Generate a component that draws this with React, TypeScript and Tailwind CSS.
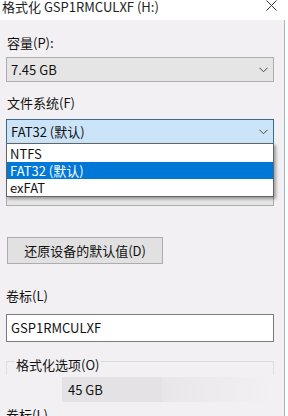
import React from "react";

const font = { fontFamily: '"Noto Sans CJK SC", "Noto Sans", sans-serif' };

function Chevron() {
  return (
    <svg className="w-[9px] h-[6px]" viewBox="0 0 9 6" fill="none" stroke="#4a4a4a" strokeWidth={1}>
      <path d="M0.5 0.8 L4.5 4.8 L8.5 0.8" />
    </svg>
  );
}

const options = ["NTFS", "FAT32 (默认)", "exFAT"];

export default function App() {
  return (
    <div className="w-[288px] h-[416px] overflow-hidden bg-white text-[13px] text-[#111]" style={font}>
      {/* title bar */}
      <div className="h-[20px] flex items-start justify-between bg-white">
        <span className="pl-[2px] leading-[14px] text-[13px] text-[#222]">格式化 GSP1RMCULXF (H:)</span>
        <svg className="mr-[11px] w-[11px] h-[11px]" viewBox="0 0 11 11" stroke="#333" strokeWidth={1}>
          <path d="M0.5 0.5 L10.5 10.5 M10.5 0.5 L0.5 10.5" />
        </svg>
      </div>

      <div className="flex">
        <div className="w-[284px] h-[396px] overflow-hidden bg-[#f2f0f2] pl-[6px] pr-[10px]">
          <div className="mt-[13px] h-[20px] leading-[20px] pl-[1px]">容量(P):</div>
          <div className="mt-[4px] h-[25px] border border-[#adadad] bg-[#e6e5e6] flex items-center justify-between pl-[4px] pr-[5px]">
            <span>7.45 GB</span>
            <Chevron />
          </div>

          <div className="mt-[11px] h-[20px] leading-[20px] pl-[1px]">文件系统(F)</div>
          <div className="relative mt-[6px]">
            <div className="h-[25px] border border-[#3b6a94] bg-[#cce4f7] flex items-center justify-between pl-[4px] pr-[5px]">
              <span>FAT32 (默认)</span>
              <Chevron />
            </div>
            <div className="absolute left-0 top-[24px] w-full h-[54px] bg-white border border-[#646464] shadow-[2px_2px_3px_rgba(0,0,0,0.35)] z-10 py-[1px]">
              {options.map((o, i) => (
                <div
                  key={o}
                  className={`h-[17px] leading-[17px] pl-[3px] ${i === 1 ? "bg-[#0078d7] text-white" : ""}`}
                >
                  {o}
                </div>
              ))}
            </div>
          </div>

          {/* allocation unit select, hidden under the open list */}
          <div className="mt-[37px] h-[25px] border border-[#adadad] bg-[#e6e5e6]" />

          <button
            type="button"
            className="block mt-[31px] ml-[1px] w-[156px] h-[27px] border border-[#adadad] bg-[#e1e1e1] text-center"
          >
            还原设备的默认值(D)
          </button>

          <div className="mt-[22px] h-[20px] leading-[20px]">卷标(L)</div>
          <div className="mt-[8px] h-[28px] border border-[#7a7a7a] bg-white flex items-center pl-[4px]">
            GSP1RMCULXF
          </div>

          <div className="mt-[19px] h-[14px] border-t border-x border-[#dcdcdc] relative">
            <span className="absolute left-[8px] -top-[5px] leading-[16px] px-[1px] bg-[#f2f0f2]">格式化选项(O)</span>
          </div>
          <div className="mt-[2px] ml-[56px] h-[25px] flex items-center">
            <div className="h-full w-[100px] bg-[#e4e2e4] flex items-center pl-[6px]">45 GB</div>
            <div className="h-full w-[110px] bg-gradient-to-r from-[#e8e6e8] to-transparent" />
          </div>
          <div className="mt-[5px] h-[16px] leading-[16px]">卷标(L)</div>
        </div>
        <div className="w-[1px] h-[396px] bg-[#9fb6cd]" />
        <div className="flex-1 bg-white" />
      </div>
    </div>
  );
}
